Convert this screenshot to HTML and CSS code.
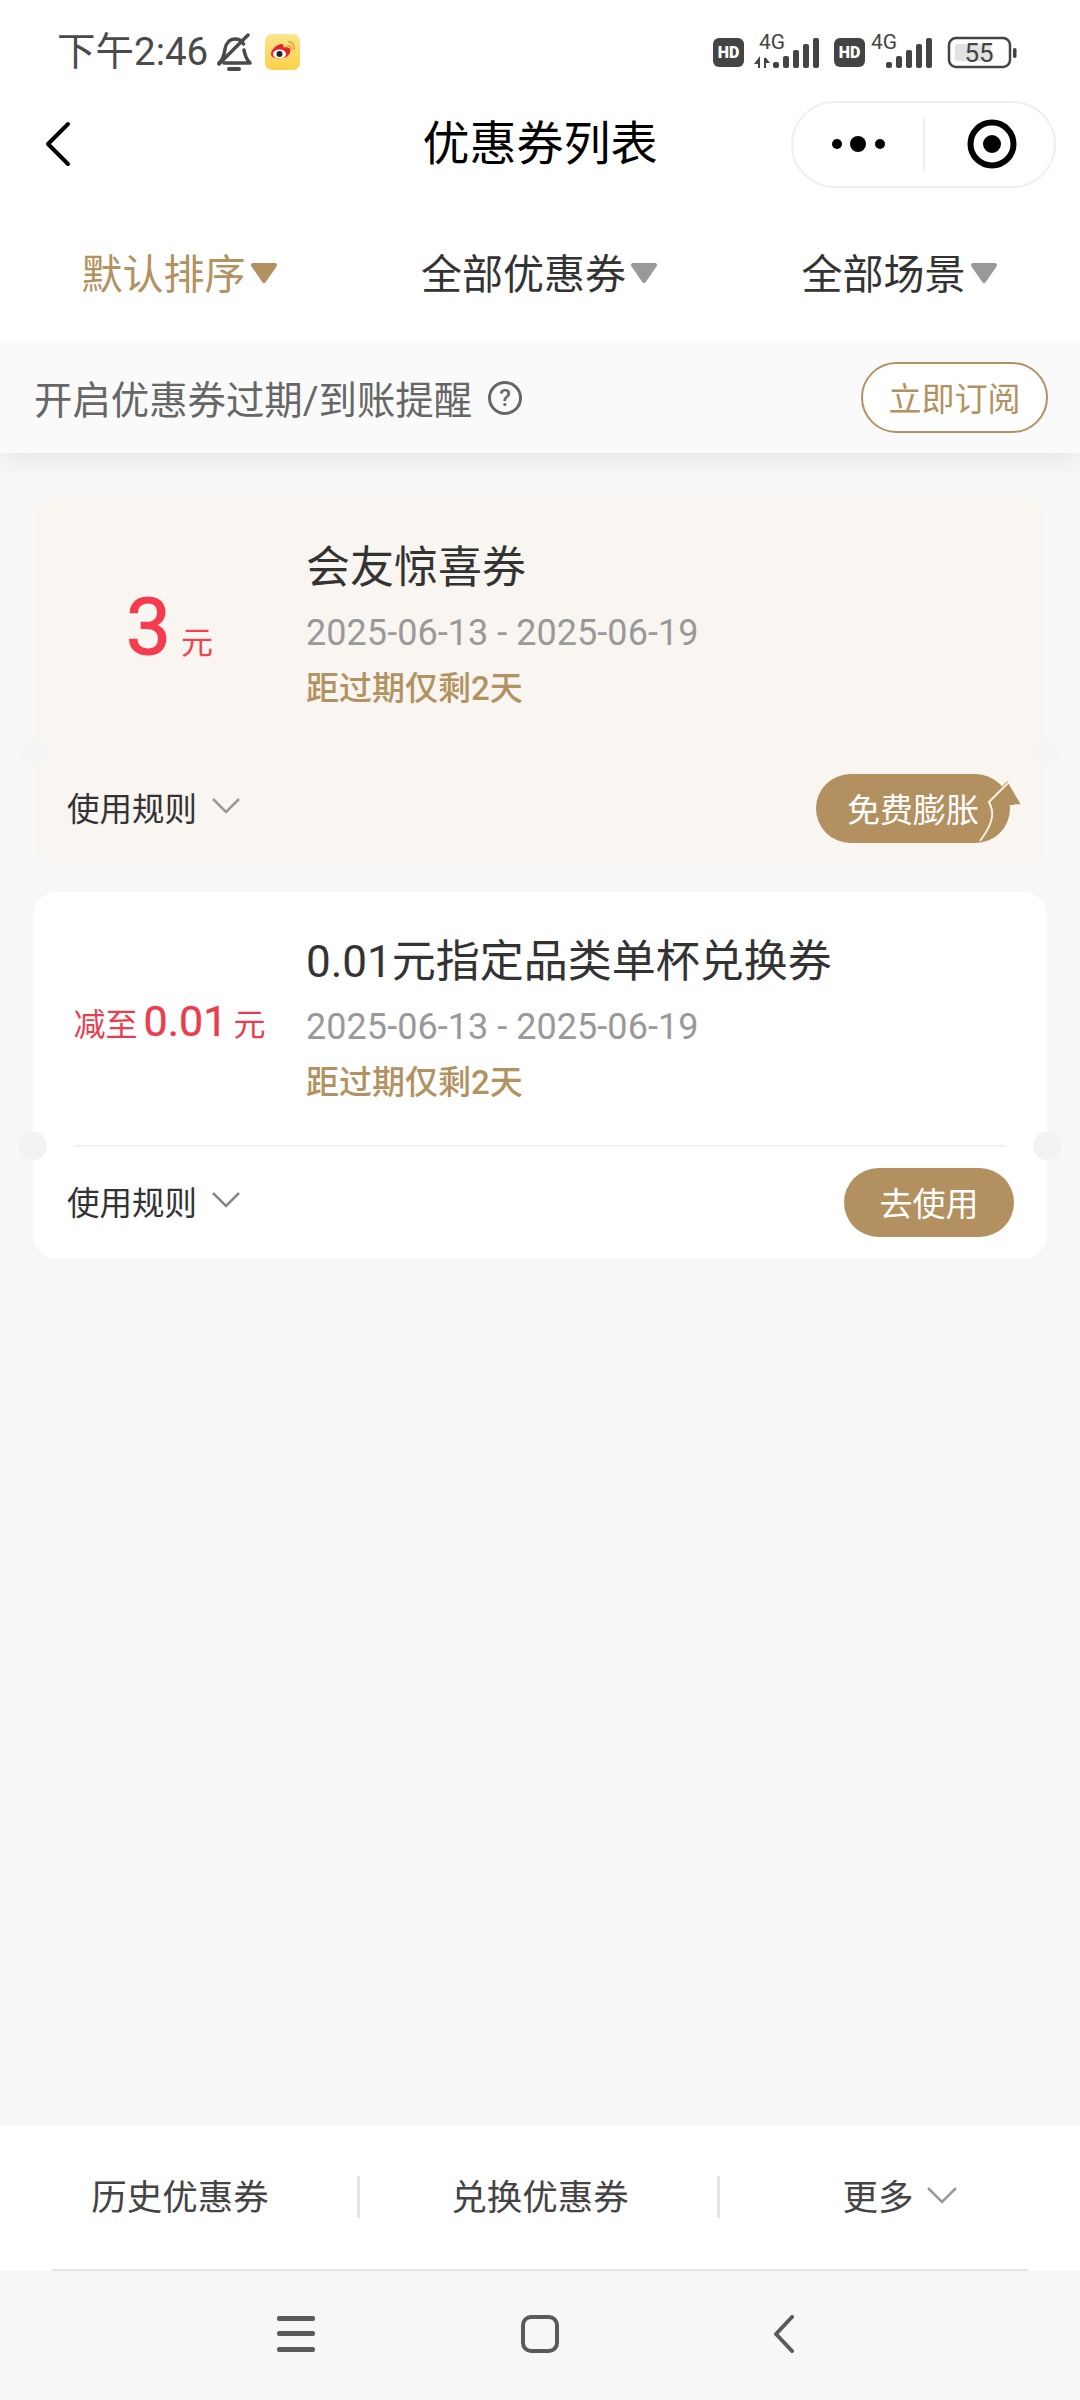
FILE: index.html
```html
<!DOCTYPE html>
<html lang="zh-CN">
<head>
<meta charset="utf-8">
<title>优惠券列表</title>
<link rel="stylesheet" href="styles.css">
</head>
<body>
<div class="app">
  <header class="head">
    <div class="status">
      <div class="status-left">
        <span class="clock">下午2:46</span>
        <svg class="bell" width="36" height="38" viewBox="0 0 36 38" fill="none" stroke="#4a4a4a" stroke-width="3.500" stroke-linecap="round" stroke-linejoin="round">
          <path d="M3 30c4-3 5-7 6-14 1-6 5-10 10-10 4 0 7 2 8.500 5"/>
          <path d="M28 17c1 6 3 10 6 13H8"/>
          <path d="M3 31 32 2"/>
          <path d="M13 36h10" stroke-width="4"/>
        </svg>
        <svg class="weibo" width="35" height="36" viewBox="0 0 35 36">
          <defs><linearGradient id="wb" x1="0" y1="0" x2="0" y2="1"><stop offset="0" stop-color="#fbe58c"/><stop offset="1" stop-color="#fdd048"/></linearGradient></defs>
          <rect width="35" height="36" rx="7" fill="url(#wb)"/>
          <path d="M6 20c0-4 5-9 10-10 2 0 3 1 2.500 3.500 4-1 7 0 7 3 0 5-6 8-10.500 8-5 0-9-1.500-9-4.500z" fill="#e0262a"/>
          <ellipse cx="14.500" cy="20" rx="6.500" ry="4.500" fill="#fff"/>
          <circle cx="14.500" cy="20" r="3" fill="#222"/>
          <path d="M22 12c3-1 5 1 5 4M23 8c4-1 7 3 6 8" fill="none" stroke="#e9a33b" stroke-width="1.600"/>
        </svg>
      </div>
      <svg class="status-right" width="310" height="44" viewBox="0 -4 310 44">
        <rect x="0" y="4" width="31" height="29" rx="6" fill="#444"/>
        <text x="15.500" y="24" class="hd">HD</text>
        <text x="46" y="15" class="net">4G</text>
        <path d="M46 34v-9l-3 4h3M52 24v10M52 24l3 4h-3" fill="none" stroke="#444" stroke-width="2"/>
        <g fill="#444">
          <rect x="60" y="28" width="6" height="6" rx="2"/><rect x="70" y="22" width="6" height="12" rx="2"/><rect x="80" y="16" width="6" height="18" rx="2"/><rect x="90" y="10" width="6" height="24" rx="2"/><rect x="100" y="4" width="6" height="30" rx="2"/>
        </g>
        <rect x="121" y="4" width="31" height="29" rx="6" fill="#444"/>
        <text x="136.500" y="24" class="hd">HD</text>
        <text x="158" y="15" class="net">4G</text>
        <g fill="#444">
          <rect x="173" y="28" width="6" height="6" rx="2"/><rect x="183" y="22" width="6" height="12" rx="2"/><rect x="193" y="16" width="6" height="18" rx="2"/><rect x="203" y="10" width="6" height="24" rx="2"/><rect x="213" y="4" width="6" height="30" rx="2"/>
        </g>
        <rect x="236" y="4" width="61" height="29" rx="7" fill="none" stroke="#444" stroke-width="2.500"/>
        <rect x="242" y="10" width="36" height="17" rx="3" fill="#e2e2e2"/>
        <text x="266" y="28" class="batt">55</text>
        <rect x="300" y="14" width="3.500" height="10" rx="1.700" fill="#444"/>
      </svg>
    </div>
    <div class="nav">
      <svg class="back" width="28" height="46" viewBox="0 0 28 46" fill="none" stroke="#000" stroke-width="4" stroke-linecap="round" stroke-linejoin="round"><path d="M24 3 4 23l20 20"/></svg>
      <h1 class="title">优惠券列表</h1>
      <div class="capsule">
        <div class="cap-cell cap-more">
          <svg width="60" height="20" viewBox="0 0 60 20" fill="#000"><circle cx="9" cy="10" r="5"/><circle cx="30" cy="10" r="8"/><circle cx="52" cy="10" r="5"/></svg>
        </div>
        <div class="cap-cell cap-target">
          <svg width="50" height="50" viewBox="0 0 50 50"><circle cx="25" cy="25" r="21.500" fill="none" stroke="#000" stroke-width="6"/><circle cx="25" cy="25" r="9" fill="#000"/></svg>
        </div>
      </div>
    </div>
    <div class="tabs">
      <div class="tab tab-on">默认排序<svg class="tri" width="30" height="24" viewBox="0 0 30 24"><path d="M4 4h22L15 20z" fill="#b39261" stroke="#b39261" stroke-width="4" stroke-linejoin="round"/></svg></div>
      <div class="tab">全部优惠券<svg class="tri" width="30" height="24" viewBox="0 0 30 24"><path d="M4 4h22L15 20z" fill="#999" stroke="#999" stroke-width="4" stroke-linejoin="round"/></svg></div>
      <div class="tab">全部场景<svg class="tri" width="30" height="24" viewBox="0 0 30 24"><path d="M4 4h22L15 20z" fill="#999" stroke="#999" stroke-width="4" stroke-linejoin="round"/></svg></div>
    </div>
  </header>

  <div class="notice">
    <div class="notice-text">
      <span>开启优惠券过期/到账提醒</span>
      <span class="help">?</span>
    </div>
    <div class="sub-btn">立即订阅</div>
  </div>

  <main class="list">
    <article class="coupon coupon-new">
      <i class="notch notch-l"></i><i class="notch notch-r"></i>
      <div class="c-top">
        <div class="amount"><span class="num-big">3</span><span class="unit unit-big">元</span></div>
        <div class="info">
          <div class="c-title">会友惊喜券</div>
          <div class="c-date">2025-06-13 - 2025-06-19</div>
          <div class="c-exp">距过期仅剩2天</div>
        </div>
      </div>
      <div class="c-foot">
        <div class="rules">使用规则<svg width="30" height="18" viewBox="0 0 30 18" fill="none" stroke="#999" stroke-width="2.500"><path d="M2 2l13 13L28 2"/></svg></div>
        <div class="inflate">
          <span class="use-btn inflate-btn">免费膨胀</span>
          <svg class="arrow" width="46" height="74" viewBox="0 0 46 74">
            <path d="M30 12 44 36H30C29 50 24 64 8 72L6 70c8-10 14-22 8-36 4-8 8-16 16-22z" fill="#b39060"/>
            <path d="M2 72c6-8 11-16 12-24 1-6-1-11-3-15l19-19" fill="none" stroke="#f9f1e2" stroke-width="2"/>
            <path d="M30 12 44 36h-8" fill="none" stroke="#fdf9f2" stroke-width="1.500"/>
          </svg>
        </div>
      </div>
    </article>

    <article class="coupon">
      <i class="notch notch-l"></i><i class="notch notch-r"></i>
      <div class="c-top">
        <div class="amount"><span class="unit">减至</span><span class="num">0.01</span><span class="unit">元</span></div>
        <div class="info">
          <div class="c-title">0.01元指定品类单杯兑换券</div>
          <div class="c-date">2025-06-13 - 2025-06-19</div>
          <div class="c-exp">距过期仅剩2天</div>
        </div>
      </div>
      <div class="c-foot">
        <div class="rules">使用规则<svg width="30" height="18" viewBox="0 0 30 18" fill="none" stroke="#888" stroke-width="2.500"><path d="M2 2l13 13L28 2"/></svg></div>
        <span class="use-btn">去使用</span>
      </div>
    </article>
  </main>

  <div class="bottom">
    <div class="bottom-row">
      <div class="b-item">历史优惠券</div>
      <div class="b-item">兑换优惠券</div>
      <div class="b-item b-more">更多<svg width="32" height="18" viewBox="0 0 32 18" fill="none" stroke="#999" stroke-width="2.500"><path d="M2 2l14 14L30 2"/></svg></div>
    </div>
  </div>

  <div class="sysnav">
    <svg width="38" height="36" viewBox="0 0 38 36" fill="#5a5a5a"><rect y="0" width="38" height="5" rx="2"/><rect y="15" width="38" height="5" rx="2"/><rect y="31" width="38" height="5" rx="2"/></svg>
    <svg width="38" height="38" viewBox="0 0 38 38" fill="none" stroke="#5a5a5a" stroke-width="4"><rect x="2" y="2" width="34" height="34" rx="8"/></svg>
    <svg width="22" height="38" viewBox="0 0 22 38" fill="none" stroke="#5a5a5a" stroke-width="4" stroke-linecap="round" stroke-linejoin="round"><path d="M19 2 3 19l16 17"/></svg>
  </div>
</div>
</body>
</html>
```

FILE: styles.css
```css
* { box-sizing: border-box; }
html, body { margin: 0; padding: 0; }
body {
  width: 1080px;
  height: 2400px;
  overflow: hidden;
  background: #f7f7f7;
  font-family: "Roboto", "Noto Sans CJK SC", sans-serif;
  color: #333;
}
.app { display: flex; flex-direction: column; height: 2400px; }

.head { background: #fff; position: relative; z-index: 1; }
.status {
  height: 72px;
  padding: 0 63px 0 57px;
  display: flex;
  justify-content: space-between;
  align-items: flex-start;
}
.status-left { display: flex; align-items: center; height: 40px; margin-top: 32px; }
.clock { font-size: 38.500px; line-height: 40px; color: #4a4a4a; white-space: nowrap; }
.bell { margin-left: 8px; }
.weibo { margin-left: 13px; }
.status-right { margin-top: 30px; margin-right: -6px; flex: none; }
.hd { font: 900 16px "Roboto", sans-serif; fill: #fff; text-anchor: middle; }
.net { font: 400 21px "Roboto", sans-serif; fill: #444; }
.batt { font: 400 26px "Roboto", sans-serif; fill: #444; text-anchor: middle; }

.nav {
  height: 144px;
  display: grid;
  grid-template-columns: 265px 1fr 265px;
  justify-items: center;
  align-items: center;
  padding: 0 24px;
}
.back { justify-self: start; margin-left: 20px; }
.title {
  margin: 0;
  font-size: 47px;
  font-weight: 400;
  line-height: 60px;
  color: #000;
}
.capsule {
  width: 265px;
  height: 87px;
  border: 2px solid #efefef;
  border-radius: 44px;
  display: flex;
  align-items: center;
  background: #fff;
}
.cap-cell { display: flex; justify-content: center; align-items: center; height: 53px; }
.cap-more { width: 130px; }
.cap-target { flex: 1; border-left: 2px solid #ececec; padding-left: 5px; }

.tabs { display: grid; grid-template-columns: repeat(3, 360px); height: 125px; padding-bottom: 16px; }
.tab {
  display: flex;
  justify-content: center;
  align-items: center;
  gap: 3px;
  font-size: 41px;
  color: #333;
}
.tab-on { color: #b39261; }
.tri { margin-top: 5px; }

.notice {
  height: 112px;
  padding: 0 32px 0 34px;
  background: #fafafa;
  display: flex;
  justify-content: space-between;
  align-items: center;
  box-shadow: 0 6px 24px rgba(0, 0, 0, .07);
  position: relative;
}
.notice-text { display: flex; align-items: center; gap: 16px; font-size: 38.400px; color: #666; }
.help {
  width: 34px;
  height: 34px;
  margin-top: 2px;
  border: 3px solid #666;
  border-radius: 50%;
  display: flex;
  justify-content: center;
  align-items: center;
  font-size: 24px;
  font-weight: 500;
  line-height: 1;
}
.sub-btn {
  width: 187px;
  height: 71px;
  border: 2px solid #b39261;
  border-radius: 36px;
  background: #fff;
  color: #b39261;
  font-size: 33px;
  display: flex;
  justify-content: center;
  align-items: center;
}

.list { flex: 1; padding: 45px 33px 0; display: flex; flex-direction: column; gap: 27px; }
.coupon {
  position: relative;
  height: 367px;
  background: #fff;
  border-radius: 24px;
}
.coupon-new { background: #f9f5f1; }
.notch {
  position: absolute;
  top: 240px;
  width: 28px;
  height: 28px;
  border-radius: 50%;
  background: #f2f2f2;
}
.notch-l { left: -14px; }
.notch-r { right: -14px; }
.coupon-new .notch { background: #f5f5f5; }

.c-top {
  height: 255px;
  margin: 0 41px 0 0;
  display: grid;
  grid-template-columns: 273px 1fr;
  position: relative;
}
.c-top::after {
  content: "";
  position: absolute;
  left: 41px;
  right: 0;
  bottom: 0;
  height: 2px;
  background: #f3f3f3;
}
.coupon-new .c-top::after { background: #f8f4ef; }

.amount {
  padding-top: 105px;
  display: flex;
  justify-content: center;
  align-items: baseline;
  gap: 6px;
  line-height: 48px;
  color: #e83e4f;
}
.unit { font-size: 32px; }
.num { font-size: 43px; font-weight: 400; -webkit-text-stroke: .4px #e83e4f; }
.num-big { font-size: 80px; font-weight: 400; color: #f53b4d; -webkit-text-stroke: 1.200px #f53b4d; }
.unit-big { color: #f0434f; margin-left: 4px; }

.info { padding-top: 43px; }
.c-title { font-size: 44px; line-height: 54px; color: #333; white-space: nowrap; }
.c-date { margin-top: 14px; font-size: 36px; line-height: 48px; color: #999; white-space: nowrap; letter-spacing: .05px; }
.c-exp { margin-top: 10px; font-size: 33px; line-height: 44px; color: #b39261; font-weight: 500; }

.c-foot {
  height: 110px;
  padding: 0 33px;
  display: flex;
  justify-content: space-between;
  align-items: center;
}
.rules { display: flex; align-items: center; gap: 14px; font-size: 32.500px; color: #333; margin-top: -4px; margin-left: 1px; }
.use-btn {
  width: 170px;
  height: 69px;
  border-radius: 35px;
  background: #b39060;
  color: #fff;
  font-size: 33px;
  display: flex;
  justify-content: center;
  align-items: center;
}
.inflate { position: relative; margin-right: 4px; }
.inflate-btn { width: 194px; }
.arrow { position: absolute; right: -14px; top: -5px; }

.bottom { background: #fff; height: 146px; }
.bottom-row {
  height: 144px;
  display: grid;
  grid-template-columns: repeat(3, 360px);
  align-items: center;
}
.bottom::after {
  content: "";
  display: block;
  height: 2px;
  margin: 0 52px;
  background: #e2e2e2;
}
.b-item {
  display: flex;
  justify-content: center;
  align-items: center;
  gap: 12px;
  height: 42px;
  padding-bottom: 5px;
  font-size: 35.500px;
  color: #444;
}
.b-item + .b-item { border-left: 3px solid #e4e4e4; margin-left: -3px; }

.sysnav {
  height: 129px;
  background: #f7f7f7;
  display: grid;
  grid-template-columns: repeat(3, 244px);
  justify-content: center;
  justify-items: center;
  align-items: center;
  padding-bottom: 4px;
}
```
